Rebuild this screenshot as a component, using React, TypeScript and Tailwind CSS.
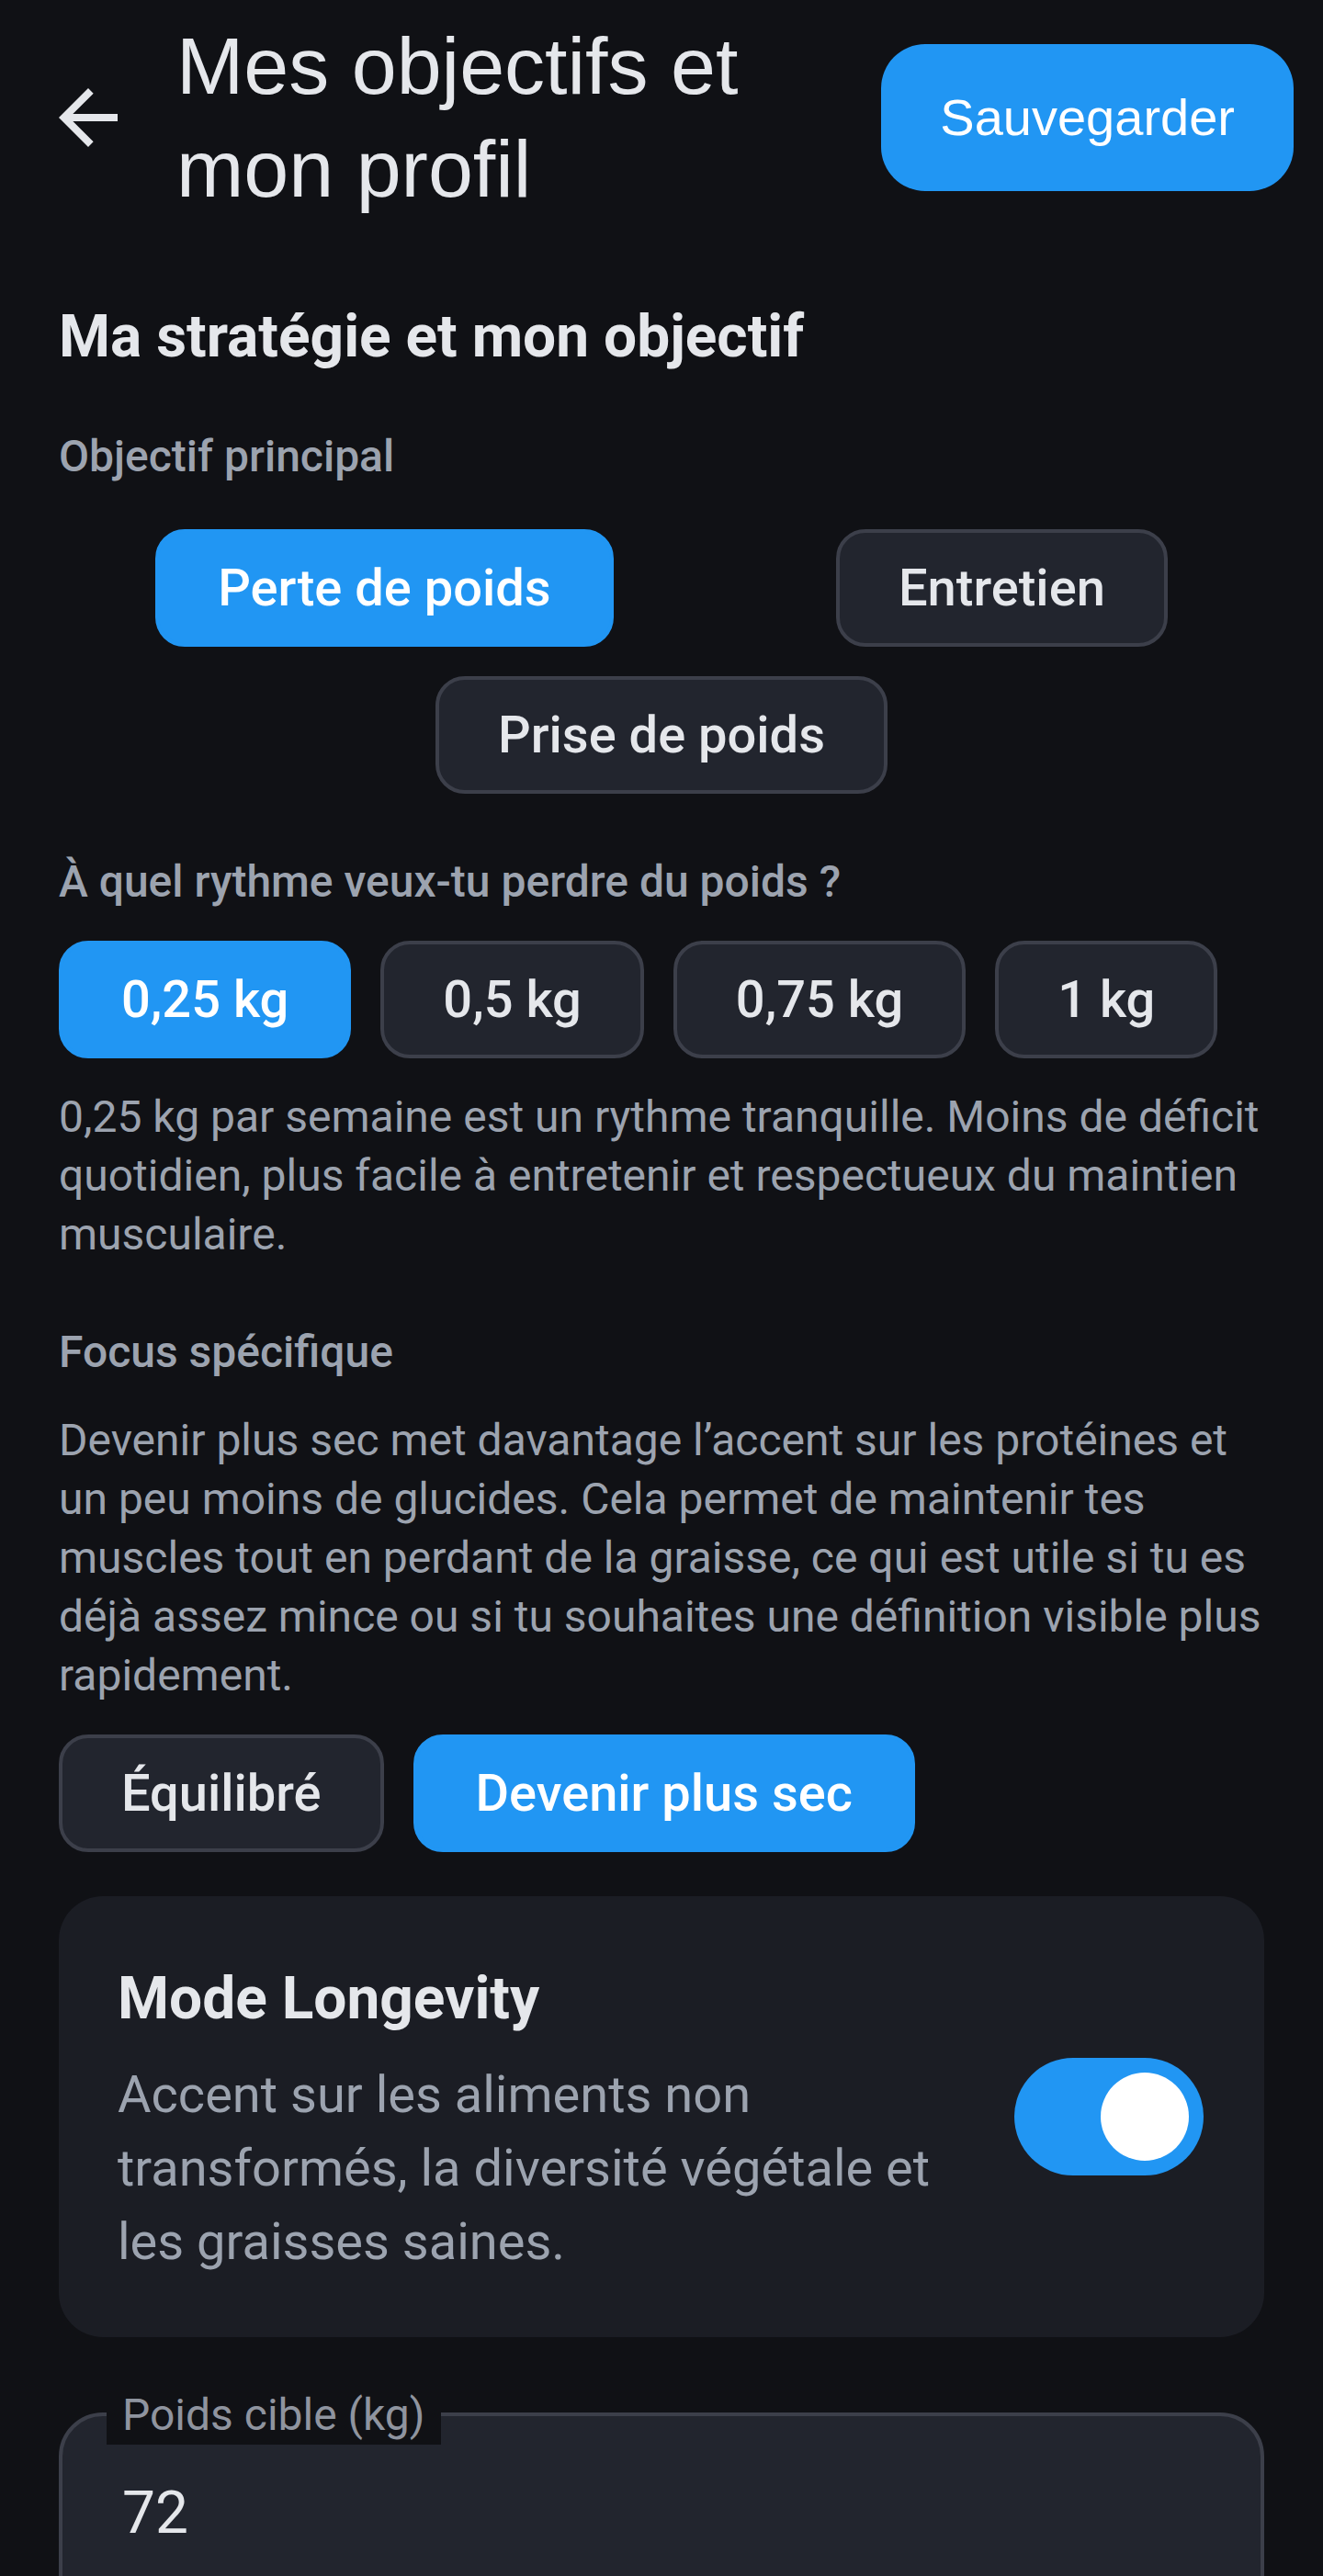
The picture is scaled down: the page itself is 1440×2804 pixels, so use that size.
import { useState } from "react";

const goals = ["Perte de poids", "Entretien", "Prise de poids"];
const paces = ["0,25 kg", "0,5 kg", "0,75 kg", "1 kg"];
const focuses = ["Équilibré", "Devenir plus sec"];

function OptionButton({
  label,
  selected,
  onClick,
}: {
  label: string;
  selected: boolean;
  onClick: () => void;
}) {
  return (
    <button
      onClick={onClick}
      className={
        selected
          ? "h-[128px] px-[64px] rounded-[32px] border-4 border-[#2196f3] bg-[#2196f3] text-white text-[56px] font-medium leading-none"
          : "h-[128px] px-[64px] rounded-[32px] border-4 border-[#3c3f4a] bg-[#22252e] text-[#e5e7eb] text-[56px] font-medium leading-none"
      }
    >
      {label}
    </button>
  );
}

export default function App() {
  const [goal, setGoal] = useState(0);
  const [pace, setPace] = useState(0);
  const [focus, setFocus] = useState(1);
  const [longevity, setLongevity] = useState(true);

  return (
    <div className="h-[2804px] overflow-hidden bg-[#101115] font-['Roboto',sans-serif]">
      <header className="h-[256px] flex items-center">
        <button className="ml-[48px] w-[96px] h-[96px] shrink-0">
          <svg viewBox="0 0 24 24" className="w-[96px] h-[96px] fill-[#e5e7eb]">
            <path d="M20 11H7.83l5.59-5.59L12 4l-8 8 8 8 1.41-1.41L7.83 13H20v-2z" />
          </svg>
        </button>
        <h1 className="ml-[48px] flex-1 text-[88px] leading-[112px] text-[#e5e7eb] font-['Liberation_Sans',Arial,sans-serif]">
          Mes objectifs et mon profil
        </h1>
        <button className="ml-[64px] mr-[32px] h-[160px] px-[64px] rounded-[48px] bg-[#2196f3] text-white text-[56px] font-['Liberation_Sans',Arial,sans-serif]">
          Sauvegarder
        </button>
      </header>

      <main className="px-[64px]">
        <h2 className="mt-[63px] text-[64px] leading-[96px] font-bold text-[#e5e7eb]">
          Ma stratégie et mon objectif
        </h2>

        <p className="mt-[50px] text-[48px] leading-[64px] font-medium text-[#9ca3af]">
          Objectif principal
        </p>
        <div className="mt-[47px] flex flex-wrap justify-around gap-[32px]">
          {goals.map((g, i) => (
            <OptionButton key={g} label={g} selected={goal === i} onClick={() => setGoal(i)} />
          ))}
        </div>

        <p className="mt-[64px] text-[48px] leading-[64px] font-medium text-[#9ca3af]">
          À quel rythme veux-tu perdre du poids ?
        </p>
        <div className="mt-[32px] flex gap-[32px]">
          {paces.map((p, i) => (
            <OptionButton key={p} label={p} selected={pace === i} onClick={() => setPace(i)} />
          ))}
        </div>
        <p className="mt-[32px] text-[48px] leading-[64px] text-[#9ca3af]">
          0,25 kg par semaine est un rythme tranquille. Moins de déficit quotidien, plus facile à
          entretenir et respectueux du maintien musculaire.
        </p>

        <p className="mt-[64px] text-[48px] leading-[64px] font-medium text-[#9ca3af]">
          Focus spécifique
        </p>
        <p className="mt-[32px] text-[48px] leading-[64px] text-[#9ca3af]">
          Devenir plus sec met davantage l’accent sur les protéines et un peu moins de glucides. Cela
          permet de maintenir tes muscles tout en perdant de la graisse, ce qui est utile si tu es
          déjà assez mince ou si tu souhaites une définition visible plus rapidement.
        </p>
        <div className="mt-[32px] flex gap-[32px]">
          {focuses.map((f, i) => (
            <OptionButton key={f} label={f} selected={focus === i} onClick={() => setFocus(i)} />
          ))}
        </div>

        <section className="mt-[48px] rounded-[48px] bg-[#1b1d24] pl-[64px] pr-[66px] py-[64px] flex items-center gap-[64px]">
          <div className="flex-1">
            <h3 className="text-[64px] leading-[96px] font-bold text-[#e5e7eb]">Mode Longevity</h3>
            <p className="mt-[16px] text-[56px] leading-[80px] text-[#9ca3af]">
              Accent sur les aliments non transformés, la diversité végétale et les graisses saines.
            </p>
          </div>
          <button
            onClick={() => setLongevity(!longevity)}
            className={
              longevity
                ? "w-[206px] h-[128px] shrink-0 rounded-full bg-[#2196f3] flex items-center justify-end pr-[16px]"
                : "w-[206px] h-[128px] shrink-0 rounded-full bg-[#3c3f4a] flex items-center justify-start pl-[16px]"
            }
          >
            <span className="w-[96px] h-[96px] rounded-full bg-white" />
          </button>
        </section>

        <div className="relative mt-[82px] h-[300px] rounded-[48px] border-4 border-[#3c3f4a] bg-[#22252e] pt-[58px] pl-[65px]">
          <span className="absolute -top-[22px] left-[48px] px-[17px] pb-[11px] bg-[#101115] text-[48px] leading-[42px] text-[#8f949f]">
            Poids cible (kg)
          </span>
          <span className="block text-[64px] leading-[96px] text-[#e5e7eb]">72</span>
        </div>
      </main>
    </div>
  );
}
